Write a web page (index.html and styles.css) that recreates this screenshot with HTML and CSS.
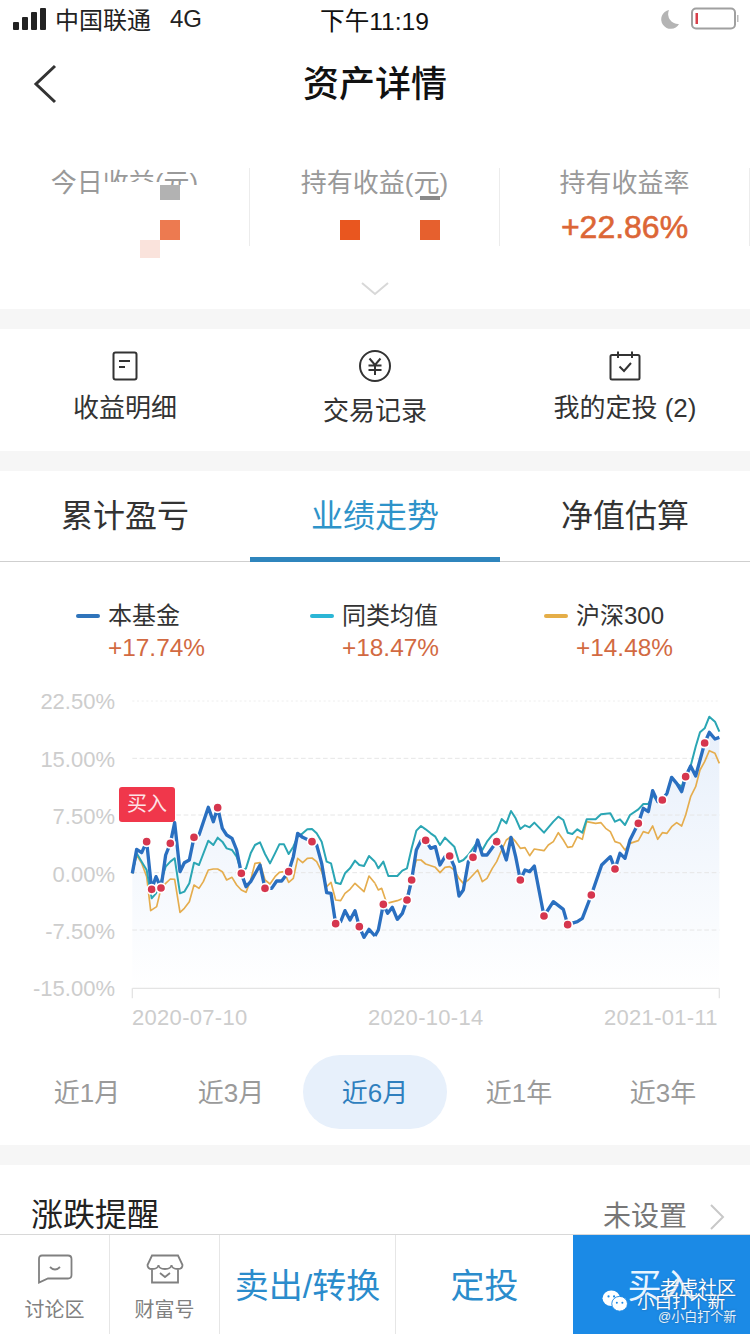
FILE: index.html
```html
<!DOCTYPE html>
<html lang="zh-CN">
<head>
<meta charset="utf-8">
<title>资产详情</title>
<link rel="stylesheet" href="styles.css">
</head>
<body>
<div class="page">
  <div class="status">
    <div class="status-left">
      <svg class="signal" width="34" height="24" viewBox="0 0 34 24"><rect x="0" y="15" width="6" height="8" rx="1"/><rect x="9" y="10" width="6" height="13" rx="1"/><rect x="18" y="5" width="6" height="18" rx="1"/><rect x="27" y="1" width="6" height="22" rx="1"/></svg>
      <span>中国联通</span><span class="net">4G</span>
    </div>
    <div class="status-time">下午11:19</div>
    <div class="status-right">
      <svg width="20" height="20" viewBox="0 0 20 20"><path class="moon" d="M9 1A9.5 9.5 0 1 0 19 15A10 10 0 0 1 9 1Z"/></svg>
      <svg width="50" height="24" viewBox="0 0 50 24"><rect class="batt" x="1" y="1.5" width="43" height="20" rx="4"/><rect class="batt-low" x="4.5" y="6" width="2.5" height="11"/><rect class="batt-nub" x="46" y="8" width="1.5" height="7"/></svg>
    </div>
  </div>

  <header class="nav">
    <svg class="back" width="26" height="40" viewBox="0 0 26 40"><path d="M23 2L4 20L23 38"/></svg>
    <h1>资产详情</h1>
  </header>

  <section class="stats">
    <div class="stat-row">
      <div class="stat"><div class="stat-label">今日收益(元)</div></div>
      <div class="stat"><div class="stat-label">持有收益(元)</div></div>
      <div class="stat"><div class="stat-label">持有收益率</div><div class="stat-value">+22.86%</div></div>
    </div>
    <svg class="chev-down" width="28" height="14" viewBox="0 0 28 14"><path d="M1 1L14 12L27 1"/></svg>
    <i class="mask mask-a"></i><i class="mask mask-b"></i>
    <i class="px px-grey1"></i><i class="px px-or1"></i><i class="px px-pale"></i>
    <i class="px px-or2"></i><i class="px px-or3"></i><i class="px px-grey2"></i>
  </section>

  <section class="shortcuts">
    <div class="shortcut">
      <svg width="30" height="30" viewBox="0 0 30 30"><rect class="ico" x="3.5" y="1.5" width="23" height="27" rx="2"/><path class="ico" d="M9 10H20M9 16H15"/></svg>
      <span>收益明细</span>
    </div>
    <div class="shortcut shortcut-low">
      <svg width="34" height="32" viewBox="0 0 34 32"><circle class="ico" cx="17" cy="16" r="15"/><path class="ico" d="M11.5 8.5L17 15L22.5 8.5M10.5 15.5H23.5M10.5 20H23.5M17 15V25"/></svg>
      <span>交易记录</span>
    </div>
    <div class="shortcut">
      <svg width="32" height="30" viewBox="0 0 32 30"><rect class="ico" x="1.5" y="4" width="29" height="24.5" rx="1.5"/><path class="ico" d="M9 0.5V7M23 0.5V7M10.5 15.5L15 20L22 12"/></svg>
      <span>我的定投 (2)</span>
    </div>
  </section>

  <nav class="tabs">
    <div class="tab">累计盈亏</div>
    <div class="tab tab-on">业绩走势</div>
    <div class="tab">净值估算</div>
  </nav>

  <section class="legend">
    <div class="leg"><div class="leg-name"><i class="mark mark-blue"></i>本基金</div><div class="leg-val">+17.74%</div></div>
    <div class="leg"><div class="leg-name"><i class="mark mark-teal"></i>同类均值</div><div class="leg-val">+18.47%</div></div>
    <div class="leg"><div class="leg-name"><i class="mark mark-orange"></i>沪深300</div><div class="leg-val">+14.48%</div></div>
  </section>

  <svg class="chart" width="750" height="350" viewBox="0 0 750 350">
    <defs>
      <linearGradient id="area" gradientUnits="userSpaceOnUse" x1="0" y1="150" x2="0" y2="930">
        <stop offset="0" stop-color="#e8f0fb"/><stop offset="1" stop-color="#ffffff"/>
      </linearGradient>
    </defs>
    <g class="ylab">
      <text x="115" y="29">22.50%</text><text x="115" y="87">15.00%</text><text x="115" y="144">7.50%</text>
      <text x="115" y="202">0.00%</text><text x="115" y="259">-7.50%</text><text x="115" y="316">-15.00%</text>
    </g>
    <g class="xlab">
      <text x="132" y="345">2020-07-10</text><text x="368" y="345">2020-10-14</text><text x="604" y="345">2021-01-11</text>
    </g>
    <g transform="scale(0.33333)">
      <polygon class="area" points="397,925 397,580 410,508 425,518 440,485 455,628 468,590 483,624 497,525 511,490 524,428 540,575 553,548 568,540 582,472 597,465 625,382 640,425 653,383 667,445 680,465 696,475 710,510 724,580 738,620 752,605 780,555 795,625 815,625 830,603 845,603 866,575 880,530 893,460 908,472 936,485 950,495 965,550 980,638 993,640 1007,731 1022,725 1035,692 1050,720 1065,692 1078,740 1092,772 1107,748 1125,768 1125,925"/>
      <polygon class="area" transform="translate(1125 0)" points="0,925 0,768 10,750 25,673 38,700 52,682 67,718 82,700 96,660 110,600 124,510 138,482 152,481 167,505 181,500 195,555 210,530 224,528 238,560 252,648 265,630 280,545 294,532 308,480 322,525 336,525 365,485 380,500 394,540 408,472 422,530 436,600 450,570 464,575 478,558 507,708 535,665 565,688 578,734 607,725 622,715 649,645 680,555 706,530 720,567 735,520 750,535 765,480 790,430 805,385 820,395 833,332 848,365 862,360 876,340 890,292 905,310 920,335 932,290 947,258 962,288 989,189 1003,157 1020,177 1033,172 1033,925"/>
      <path class="grid-dot" d="M397 63H2158"/>
      <path class="grid" d="M397 235H2158M397 405H2158M397 578H2158M397 750H2158"/>
      <path class="axis" d="M397 925H2158M397 925V955M2158 925V955"/>
      <polyline class="l-orange" points="397,580 410,525 425,550 440,590 452,692 470,680 483,625 497,610 511,597 524,598 540,697 553,685 568,665 582,615 597,625 610,605 625,570 640,567 653,567 667,575 680,600 696,592 710,615 724,630 738,637 752,600 765,550 780,548 795,600 810,612 825,590 838,577 852,575 866,607 880,595 893,535 908,548 922,535 936,534 950,545 965,575 980,620 993,607 1007,660 1022,662 1035,640 1050,628 1065,610 1078,622 1092,635 1107,588 1125,610"/>
      <polyline class="l-orange" transform="translate(1125 0)" points="0,610 10,630 20,625 35,670 67,662 96,650 110,590 124,540 138,540 152,552 181,562 195,578 210,562 224,560 238,570 252,595 265,610 280,600 308,570 322,605 336,595 352,565 365,545 380,510 394,480 408,470 422,485 436,505 450,503 464,527 478,507 507,512 520,495 535,485 550,458 565,480 578,502 592,500 607,470 622,478 635,425 662,430 678,428 692,445 706,455 720,485 735,490 750,510 765,490 790,482 805,455 820,460 833,438 848,478 862,458 876,460 890,440 905,428 920,438 932,405 947,350 962,320 975,270 989,245 1003,212 1020,220 1033,250"/>
      <polyline class="l-teal" points="397,580 410,520 425,545 440,570 455,655 468,640 483,605 497,560 511,545 524,535 540,640 553,635 568,610 582,548 597,555 625,482 640,495 653,473 667,485 680,505 696,510 710,530 724,575 738,565 752,520 765,495 780,487 795,522 810,550 825,520 838,493 852,493 866,522 880,500 893,470 908,460 922,448 936,447 950,460 965,485 980,545 993,550 1007,608 1022,612 1035,580 1050,565 1065,542 1078,555 1092,558 1107,528 1125,545"/>
      <polyline class="l-teal" transform="translate(1125 0)" points="0,545 10,565 25,545 40,588 67,588 82,572 96,565 110,505 124,452 138,438 152,448 167,460 181,470 195,495 210,473 224,487 238,500 252,546 265,540 280,525 308,485 322,510 336,485 352,465 365,455 380,417 394,430 408,393 422,415 436,447 450,436 464,442 478,428 507,458 535,425 550,410 565,420 578,458 592,462 607,448 622,458 635,418 662,418 678,403 706,400 720,425 735,418 750,435 765,405 790,388 805,372 820,372 833,345 848,365 876,340 890,292 905,310 920,320 932,285 947,258 962,200 975,157 989,145 1003,110 1020,125 1033,155"/>
      <polyline class="l-blue" points="397,580 410,508 425,518 440,485 455,628 468,590 483,624 497,525 511,490 524,428 540,575 553,548 568,540 582,472 597,465 625,382 640,425 653,383 667,445 680,465 696,475 710,510 724,580 738,620 752,605 780,555 795,625 815,625 830,603 845,603 866,575 880,530 893,460 908,472 936,485 950,495 965,550 980,638 993,640 1007,731 1022,725 1035,692 1050,720 1065,692 1078,740 1092,772 1107,748 1125,768"/>
      <polyline class="l-blue" transform="translate(1125 0)" points="0,768 10,750 25,673 38,700 52,682 67,718 82,700 96,660 110,600 124,510 138,482 152,481 167,505 181,500 195,555 210,530 224,528 238,560 252,648 265,630 280,545 294,532 308,480 322,525 336,525 365,485 380,500 394,540 408,472 422,530 436,600 450,570 464,575 478,558 507,708 535,665 565,688 578,734 607,725 622,715 649,645 680,555 706,530 720,567 735,520 750,535 765,480 790,430 805,385 820,395 833,332 848,365 862,360 876,340 890,292 905,310 920,335 932,290 947,258 962,288 989,189 1003,157 1020,177 1033,172"/>
      <g class="dots">
        <circle cx="440" cy="485" r="14"/><circle cx="455" cy="628" r="14"/><circle cx="483" cy="624" r="14"/><circle cx="511" cy="490" r="14"/><circle cx="582" cy="472" r="14"/><circle cx="653" cy="383" r="14"/><circle cx="724" cy="580" r="14"/><circle cx="795" cy="625" r="14"/><circle cx="866" cy="575" r="14"/><circle cx="936" cy="485" r="14"/><circle cx="1007" cy="731" r="14"/><circle cx="1078" cy="740" r="14"/>
        <circle cx="1150" cy="673" r="14"/><circle cx="1221" cy="660" r="14"/><circle cx="1235" cy="600" r="14"/><circle cx="1277" cy="481" r="14"/><circle cx="1349" cy="528" r="14"/><circle cx="1419" cy="532" r="14"/><circle cx="1490" cy="485" r="14"/><circle cx="1561" cy="600" r="14"/><circle cx="1632" cy="708" r="14"/><circle cx="1703" cy="734" r="14"/><circle cx="1774" cy="645" r="14"/><circle cx="1845" cy="567" r="14"/><circle cx="1915" cy="430" r="14"/><circle cx="1987" cy="360" r="14"/><circle cx="2057" cy="290" r="14"/><circle cx="2114" cy="189" r="14"/>
      </g>
    </g>
    <rect class="buy-tag" x="119" y="107" width="56" height="35" rx="3"/>
    <text class="buy-text" x="147" y="131">买入</text>
  </svg>

  <div class="ranges">
    <div class="range">近1月</div>
    <div class="range">近3月</div>
    <div class="range range-on">近6月</div>
    <div class="range">近1年</div>
    <div class="range">近3年</div>
  </div>

  <section class="remind">
    <div class="remind-title">涨跌提醒</div>
    <div class="remind-side">
      <span>未设置</span>
      <svg width="16" height="26" viewBox="0 0 16 26"><path d="M2 1L14 13L2 25"/></svg>
    </div>
  </section>

  <footer class="bar">
    <div class="bar-icon">
      <svg width="36" height="30" viewBox="0 0 36 30"><path class="ico-g" d="M5 1.5H31Q34.5 1.5 34.5 5V21Q34.5 24.5 31 24.5H11L2 28.5V5Q2 1.5 5 1.5Z"/><path class="ico-g" d="M13 13Q18 18 23 13"/></svg>
      <span>讨论区</span>
    </div>
    <div class="bar-icon">
      <svg width="38" height="30" viewBox="0 0 38 30"><path class="ico-g" d="M6 14V28.5H32V14M6 1.5H32L36.5 11Q36.5 15 32 15Q26 15 25.5 11Q25 15 19 15Q13 15 12.5 11Q12 15 6 15Q1.500 15 1.500 11ZM14 19L19 23L24 19"/></svg>
      <span>财富号</span>
    </div>
    <div class="bar-btn bar-wide">卖出/转换</div>
    <div class="bar-btn bar-wide2">定投</div>
    <div class="bar-buy">买入
      <div class="wm">
        <span class="wm-1">老虎社区</span>
        <svg class="wm-ico" width="26" height="24" viewBox="0 0 28 26"><ellipse cx="10" cy="10" rx="9.500" ry="8.500"/><ellipse class="wm-front" cx="19" cy="16" rx="8.500" ry="8"/><circle class="wm-eye" cx="7" cy="8" r="1.200"/><circle class="wm-eye" cx="13" cy="8" r="1.200"/><circle class="wm-eye" cx="16" cy="15" r="1.100"/><circle class="wm-eye" cx="22" cy="15" r="1.100"/></svg>
        <span class="wm-2">小白打个新</span>
        <span class="wm-3">@小白打个新</span>
      </div>
    </div>
  </footer>
</div>
</body>
</html>
```
FILE: styles.css
```css
* { box-sizing: border-box; }
html, body { margin: 0; padding: 0; background: #fff; }
body { font-family: "Liberation Sans", "Noto Sans CJK SC", sans-serif; color: #333; }
.page { position: relative; width: 750px; height: 1334px; overflow: hidden; background: #fff; display: flex; flex-direction: column; }
i { display: block; }

.status { height: 41px; flex: none; display: grid; grid-template-columns: 1fr auto 1fr; align-items: center; padding: 0 9px 4px 13px; font-size: 24px; color: #222; }
.status-left { display: flex; align-items: center; gap: 8px; }
.signal { fill: #222; }
.net { margin-left: 11px; }
.status-time { font-size: 24.6px; color: #111; margin-right: 5px; }
.status-right { display: flex; justify-content: flex-end; align-items: center; gap: 11px; }
.moon { fill: #b4b4b4; }
.batt { fill: none; stroke: #a0a0a0; stroke-width: 2; }
.batt-low { fill: #d8404a; }
.batt-nub { fill: #bbb; }

.nav { height: 84px; flex: none; position: relative; display: flex; align-items: center; justify-content: center; padding-top: 4px; }
.nav h1 { margin: 0; font-size: 36px; font-weight: 500; color: #111; line-height: 44px; }
.back { position: absolute; left: 32px; top: 23px; }
.back path { fill: none; stroke: #333; stroke-width: 3; }

.stats { height: 184px; flex: none; position: relative; padding-top: 43px; display: flex; flex-direction: column; align-items: center; }
.stat-row { width: 100%; display: grid; grid-template-columns: repeat(3, 250px); height: 72px; }
.stat { border-right: 1px solid #ececec; text-align: center; }
.stat-label { font-size: 26px; line-height: 30px; color: #999; }
.stat-value { font-size: 32px; line-height: 38px; margin-top: 10px; color: #dc6636; -webkit-text-stroke: 0.6px #dc6636; }
.chev-down { margin-top: 42px; }
.chev-down path { fill: none; stroke: #d8d8d8; stroke-width: 2; }

.mask { position: absolute; background: #fff; }
.mask-a { left: 100px; top: 57px; width: 62px; height: 22px; }
.mask-b { left: 162px; top: 60px; width: 40px; height: 20px; }
.px { position: absolute; width: 20px; }
.px-grey1 { left: 160px; top: 60px; height: 15px; background: #b2b2b2; }
.px-or1 { left: 160px; top: 95px; height: 20px; background: #ed7a50; }
.px-pale { left: 140px; top: 115px; height: 18px; background: #fae3dc; }
.px-or2 { left: 340px; top: 95px; height: 20px; background: #e9561f; }
.px-or3 { left: 420px; top: 95px; height: 20px; background: #e6602e; }
.px-grey2 { left: 420px; top: 71px; height: 4px; background: #8a8a8a; }

.shortcuts { height: 142px; flex: none; display: grid; grid-template-columns: repeat(3, 250px); border-top: 20px solid #f6f6f6; }
.shortcut { display: flex; flex-direction: column; align-items: center; padding-top: 22px; font-size: 26px; color: #333; }
.shortcut span { line-height: 34px; margin-top: 10px; }
.shortcut-low span { margin-top: 12px; }
.shortcut-low { padding-top: 21px; }
.ico { fill: none; stroke: #333; stroke-width: 2; }

.tabs { height: 111px; flex: none; display: grid; grid-template-columns: repeat(3, 250px); border-top: 20px solid #f6f6f6; border-bottom: 1px solid #cfcfcf; }
.tab { font-size: 32px; line-height: 44px; padding-top: 23px; text-align: center; color: #333; }
.tab-on { color: #2e93c9; border-bottom: 5px solid #2f85bd; height: 91px; }

.legend { height: 101px; flex: none; display: grid; grid-template-columns: repeat(3, 234px); padding: 39px 0 0 76px; }
.leg-name { display: flex; align-items: center; gap: 8px; font-size: 24px; line-height: 30px; color: #333; }
.mark { width: 24px; height: 4px; border-radius: 2px; }
.mark-blue { background: #2f74bb; }
.mark-teal { background: #2bb6d6; }
.mark-orange { background: #e5ae48; }
.leg-val { font-size: 24.4px; line-height: 32px; padding: 1px 0 0 32px; color: #d26a42; }

.chart { flex: none; margin-top: 17px; display: block; }
.ylab text { font-size: 22px; fill: #cdcdcd; text-anchor: end; }
.xlab text { font-size: 22px; fill: #cdcdcd; letter-spacing: 0.3px; }
.area { fill: url(#area); }
.grid { fill: none; stroke: #e6e6e6; stroke-width: 3; stroke-dasharray: 14 8; }
.grid-dot { fill: none; stroke: #eeeeee; stroke-width: 3; stroke-dasharray: 6 8; }
.axis { fill: none; stroke: #e4e4e4; stroke-width: 4; }
.l-orange { fill: none; stroke: #e5ad4e; stroke-width: 5; stroke-linejoin: round; }
.l-teal { fill: none; stroke: #2ba6b4; stroke-width: 6; stroke-linejoin: round; }
.l-blue { fill: none; stroke: #2a6fc0; stroke-width: 10; stroke-linejoin: round; }
.dots circle { fill: #d6364e; stroke: #fff; stroke-width: 5; }
.buy-tag { fill: #f0374b; }
.buy-text { font-size: 20px; fill: #fde3e6; text-anchor: middle; }

.ranges { height: 115px; flex: none; display: grid; grid-template-columns: repeat(5, 144px); padding: 25px 15px 16px; }
.range { display: flex; align-items: center; justify-content: center; font-size: 26px; color: #9a9a9a; border-radius: 37px; padding-bottom: 3px; }
.range-on { background: #e7f0fb; color: #2f7fbe; }

.remind { height: 89px; flex: none; border-top: 20px solid #f6f6f6; display: flex; justify-content: space-between; align-items: flex-end; padding: 0 25px 0 31px; }
.remind-title { font-size: 32px; line-height: 44px; color: #222; margin-bottom: -3px; }
.remind-side { display: flex; align-items: center; gap: 22px; font-size: 28px; line-height: 38px; color: #777; margin-bottom: -2px; }
.remind-side path { fill: none; stroke: #c8c8c8; stroke-width: 2; }

.bar { height: 100px; flex: none; display: grid; grid-template-columns: 110px 110px 176px 177px 177px; border-top: 1px solid #d8d8d8; background: #fff; position: relative; z-index: 1; }
.bar-icon { display: flex; flex-direction: column; align-items: center; padding-top: 19px; border-right: 1px solid #e6e6e6; font-size: 20px; color: #808080; }
.bar-icon span { line-height: 26px; margin-top: 13px; }
.ico-g { fill: none; stroke: #808080; stroke-width: 1.800; }
.bar-btn { display: flex; align-items: center; justify-content: center; font-size: 34px; color: #2b8ccc; padding-bottom: 2px; border-right: 1px solid #e6e6e6; }
.bar-wide2 { border-right: 0; }
.bar-buy { position: relative; background: #1b8ae6; color: #eaf5ff; font-size: 34px; display: flex; align-items: center; justify-content: center; padding-bottom: 2px; }

.wm { position: absolute; inset: 0; color: #fff; }
.wm span { position: absolute; white-space: nowrap; text-shadow: 0 0 2px rgba(40, 60, 90, .5); }
.wm-1 { left: 87px; top: 42px; font-size: 19px; line-height: 24px; }
.wm-2 { left: 64px; top: 55px; font-size: 17.6px; line-height: 24px; }
.wm-3 { left: 85px; top: 72px; font-size: 13px; line-height: 20px; opacity: .9; }
.wm-ico { position: absolute; left: 29px; top: 54px; fill: #fff; }
.wm-front { stroke: #1b8ae6; stroke-width: 1; }
.wm-eye { fill: #1b8ae6; }
```
